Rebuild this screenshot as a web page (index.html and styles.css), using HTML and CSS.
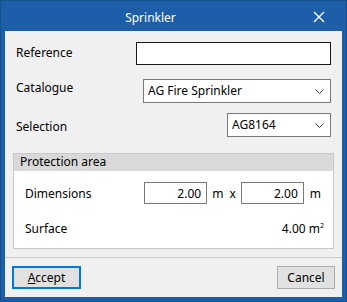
FILE: index.html
```html
<!DOCTYPE html>
<html>
  <head>
    <meta charset="UTF-8">
    <title>Sprinkler</title>
    <link rel="stylesheet" href="styles.css">
  </head>
  <body>
    <div class="window">
      <div class="titlebar">
        <span class="title">Sprinkler</span>
        <span class="close">
          <svg width="12" height="12" viewBox="0 0 12 12"><path d="M1 1L11 11M11 1L1 11" stroke="#fff" stroke-width="1.4"/></svg>
        </span>
      </div>
      <div class="content">
        <div class="form">
          <div class="row row-ref">
            <label for="ref">Reference</label>
            <input type="text" id="ref" class="field field-ref">
          </div>
          <div class="row row-cat">
            <label>Catalogue</label>
            <div class="combo combo-wide">
              <span>AG Fire Sprinkler</span>
              <svg width="9" height="5" viewBox="0 0 9 5"><path d="M0.5 0.5L4.5 4.5L8.5 0.5" fill="none" stroke="#444" stroke-width="1"/></svg>
            </div>
          </div>
          <div class="row row-sel">
            <label>Selection</label>
            <div class="combo combo-narrow">
              <span>AG8164</span>
              <svg width="9" height="5" viewBox="0 0 9 5"><path d="M0.5 0.5L4.5 4.5L8.5 0.5" fill="none" stroke="#444" stroke-width="1"/></svg>
            </div>
          </div>
          <div class="group">
            <div class="group-head">Protection area</div>
            <div class="group-body">
              <div class="grow grow-dim">
                <span>Dimensions</span>
                <div class="dims">
                  <input type="text" class="field field-num" value="2.00">
                  <span class="unit">m</span>
                  <span class="times">x</span>
                  <input type="text" class="field field-num" value="2.00">
                  <span class="unit unit-last">m</span>
                </div>
              </div>
              <div class="grow grow-surf">
                <span>Surface</span>
                <span class="value">4.00 m<sup>2</sup></span>
              </div>
            </div>
          </div>
        </div>
        <div class="footer">
          <button class="btn btn-default"><u>A</u>ccept</button>
          <button class="btn">Cancel</button>
        </div>
      </div>
    </div>
  </body>
</html>
```
FILE: styles.css
```css
body {
  margin: 0;
  font-family: "Noto Sans", sans-serif;
  font-size: 12px;
  color: #000;
}
.window {
  width: 347px;
  height: 302px;
  box-sizing: border-box;
  background-color: #1d5ea8;
  border: 1px solid #16508f;
  padding: 0 4px 4px 4px;
  display: flex;
  flex-direction: column;
}
.titlebar {
  height: 30px;
  display: flex;
  align-items: center;
  color: white;
}
.title {
  flex: 1;
  text-align: center;
  font-size: 12px;
  padding-top: 2px;
}
.close {
  width: 46px;
  display: flex;
  justify-content: center;
  align-items: center;
  padding-top: 2px;
}
.content {
  flex: 1;
  background-color: #f0f0f0;
  display: flex;
  flex-direction: column;
}
.form {
  padding: 11px 11px 0 11px;
  display: flex;
  flex-direction: column;
}
.row {
  display: flex;
  align-items: center;
  justify-content: space-between;
}
.row label {
  padding-bottom: 2px;
}
.row-ref {
  height: 23px;
}
.row-cat {
  height: 24px;
  margin-top: 14px;
}
.row-cat label {
  padding-bottom: 7px;
}
.row-sel {
  height: 24px;
  margin-top: 10px;
}
.row-sel label {
  padding-bottom: 0;
  padding-top: 3px;
}
.field {
  box-sizing: border-box;
  background: white;
  border: 1px solid #7a7a7a;
  font-family: "Noto Sans", sans-serif;
  font-size: 12px;
  padding: 0 4px;
  outline: none;
  margin: 0;
}
.field-ref {
  width: 195px;
  height: 23px;
  border-color: #171717;
}
.combo {
  box-sizing: border-box;
  height: 24px;
  background: white;
  border: 1px solid #7a7a7a;
  display: flex;
  align-items: center;
  justify-content: space-between;
  padding: 0 6px 1px 4px;
}
.combo svg {
  margin-top: 2px;
}
.combo-wide {
  width: 188px;
}
.combo-narrow {
  width: 104px;
}
.group {
  margin: 16px -3px 0 -3px;
  border: 1px solid #c9c9c9;
  background: white;
}
.group-head {
  height: 17px;
  line-height: 16px;
  background-color: #d9d9d9;
  padding-left: 6px;
}
.group-body {
  padding: 11px 9px 9px 11px;
}
.grow {
  display: flex;
  align-items: center;
  justify-content: space-between;
  height: 22px;
}
.grow-surf {
  margin-top: 13px;
}
.dims {
  display: flex;
  align-items: center;
}
.field-num {
  width: 63px;
  height: 22px;
  text-align: right;
  padding-right: 5px;
}
.unit {
  margin-left: 5px;
}
.times {
  margin: 0 5px 0 6px;
}
.unit-last {
  margin-left: 6px;
  margin-right: 3px;
}
.value sup {
  font-size: 7px;
  vertical-align: 5px;
  line-height: 0;
}
.footer {
  margin-top: 8px;
  border-top: 1px solid #cacaca;
  padding: 8px 7px 8px 7px;
  display: flex;
  justify-content: space-between;
}
.btn {
  box-sizing: border-box;
  height: 23px;
  background-color: #e1e1e1;
  border: 1px solid #adadad;
  font-family: "Noto Sans", sans-serif;
  font-size: 12px;
  color: #000;
  padding: 0 0 1px 0;
  width: 58px;
}
.btn-default {
  width: 69px;
  border: 2px solid #0078d7;
}
```
